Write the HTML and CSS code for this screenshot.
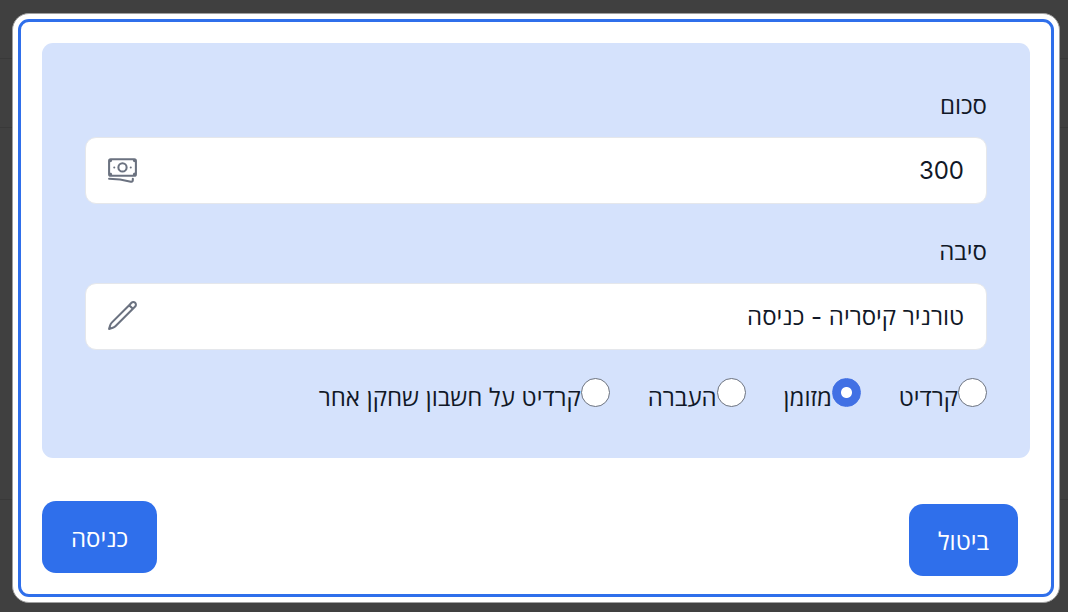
FILE: index.html
```html
<!DOCTYPE html>
<html lang="he" dir="rtl">
<head>
<meta charset="utf-8">
<meta name="viewport" content="width=device-width, initial-scale=1">
<title>כניסה</title>
<link rel="stylesheet" href="styles.css">
</head>
<body>
<div class="backdrop">
  <div class="modal" role="dialog" aria-modal="true">
    <form class="frame">
      <div class="panel">
        <div class="group">
          <label class="label" for="amount">סכום</label>
          <div class="field">
            <input class="input" id="amount" type="text" inputmode="numeric" value="300">
            <svg class="icon" viewBox="0 0 24 24" aria-hidden="true"><path d="M2.25 18.75a60.07 60.07 0 0115.797 2.101c.727.198 1.453-.342 1.453-1.096V18.75M3.75 4.5v.75A.75.75 0 013 6h-.75m0 0v-.375c0-.621.504-1.125 1.125-1.125H20.25M2.25 6v9m18-10.5v.75c0 .414.336.75.75.75h.75m-1.5-1.5h.375c.621 0 1.125.504 1.125 1.125v9.75c0 .621-.504 1.125-1.125 1.125h-.375m1.5-1.5H21a.75.75 0 00-.75.75v.75m0 0H3.75m0 0h-.375a1.125 1.125 0 01-1.125-1.125V15m1.5 1.5v-.75A.75.75 0 003 15h-.75M15 10.5a3 3 0 11-6 0 3 3 0 016 0zm3 0h.008v.008H18V10.5zm-12 0h.008v.008H6V10.5z"/></svg>
          </div>
        </div>
        <div class="group">
          <label class="label" for="reason">סיבה</label>
          <div class="field">
            <input class="input" id="reason" type="text" value="טורניר קיסריה - כניסה">
            <svg class="icon" viewBox="0 0 24 24" aria-hidden="true"><path d="M16.862 4.487l1.687-1.688a1.875 1.875 0 112.652 2.652L6.832 19.82a4.5 4.5 0 01-1.897 1.13l-2.685.8.8-2.685a4.5 4.5 0 011.13-1.897L16.863 4.487zm0 0L19.5 7.125"/></svg>
          </div>
        </div>
        <div class="options">
          <div class="option"><input class="radio" type="radio" name="method" id="credit"><label class="option-label" for="credit">קרדיט</label></div>
          <div class="option"><input class="radio" type="radio" name="method" id="cash" checked><label class="option-label" for="cash">מזומן</label></div>
          <div class="option"><input class="radio" type="radio" name="method" id="transfer"><label class="option-label" for="transfer">העברה</label></div>
          <div class="option"><input class="radio" type="radio" name="method" id="other"><label class="option-label" for="other">קרדיט על חשבון שחקן אחר</label></div>
        </div>
      </div>
      <div class="actions">
        <button class="button cancel" type="button">ביטול</button>
        <button class="button" type="submit">כניסה</button>
      </div>
    </form>
  </div>
</div>
</body>
</html>
```
FILE: styles.css
```css
* {
  box-sizing: border-box;
}

body {
  margin: 0;
  color: #111827;
  background: #404040;
  font-family: Inter, "Open Sans", "Noto Sans", "DejaVu Sans", sans-serif;
  font-size: 24px;
  line-height: 30px;
}

/* Dimmed page with the row rules of the list behind the dialog */
.backdrop {
  min-height: 100vh;
  padding: 13px 8px 10px 12px;
  background:
    linear-gradient(#393939, #393939) 0 58px / 100% 1px no-repeat,
    linear-gradient(#393939, #393939) 0 127px / 100% 1px no-repeat,
    linear-gradient(#393939, #393939) 0 499px / 100% 1px no-repeat,
    #404040;
}

.modal {
  padding: 5px;
  background: #fff;
  border: 1px solid #a0a0a0;
  border-radius: 17px;
}

.frame {
  padding: 21px 21px 18px;
  border: 3px solid #2f6feb;
  border-radius: 11px;
}

.panel {
  padding: 48px 43px 46px;
  background: #d5e2fc;
  border-radius: 11px;
}

.group + .group {
  margin-top: 33px;
}

.label {
  display: block;
  margin-bottom: 16px;
}

.field {
  display: flex;
  align-items: center;
  height: 67px;
  padding: 0 22px 2px 20px;
  background: #fff;
  border: 1px solid #e5e7eb;
  border-radius: 11px;
}

.input {
  flex: 1;
  min-width: 0;
  padding: 2px 0 0;
  color: inherit;
  background: none;
  border: 0;
  outline: 0;
  font: inherit;
}

.icon {
  width: 33px;
  height: 33px;
  fill: none;
  stroke: #6b7280;
  stroke-width: 1.5;
  stroke-linecap: round;
  stroke-linejoin: round;
}

.options {
  display: flex;
  flex-wrap: wrap;
  gap: 38px;
  margin-top: 28px;
}

.option {
  display: flex;
  height: 34px;
}

.radio {
  width: 29px;
  height: 29px;
  margin: 0;
  appearance: none;
  background: #fff;
  border: 1px solid #6b7280;
  border-radius: 50%;
}

.radio:checked {
  background: radial-gradient(circle, #fff 5px, #4170e4 6px);
  border-color: #4170e4;
}

.option-label {
  padding-top: 5px;
}

.actions {
  display: flex;
  justify-content: space-between;
  align-items: flex-start;
  padding: 43px 12px 0 0;
}

.button {
  height: 72px;
  padding: 3px 29px 0;
  color: #fff;
  background: #2f6feb;
  border: 0;
  border-radius: 14px;
  font: inherit;
}

.cancel {
  margin-top: 3px;
}
```
